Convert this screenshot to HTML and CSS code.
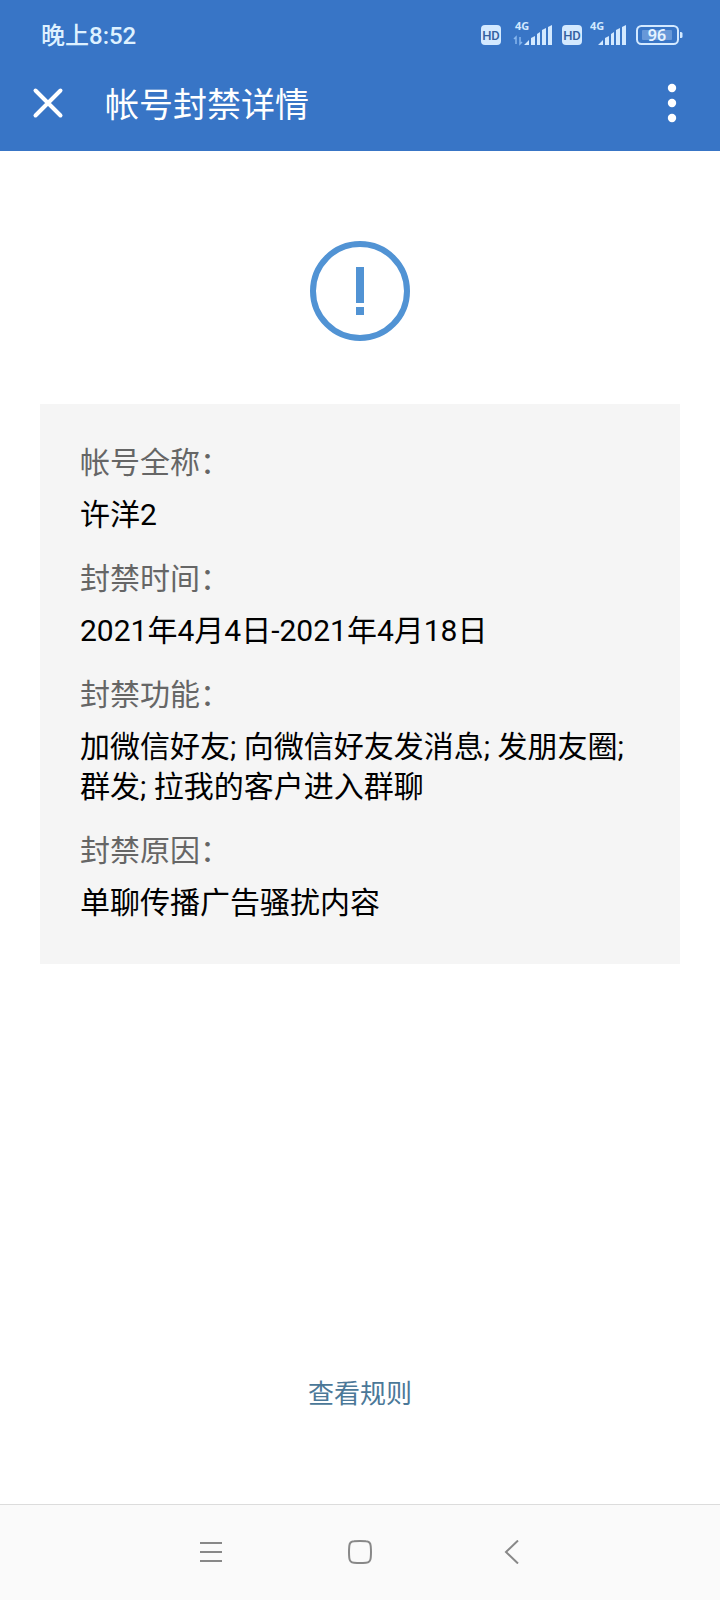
FILE: index.html
```html
<!DOCTYPE html>
<html lang="zh-CN">
<head>
  <meta charset="UTF-8">
  <meta name="viewport" content="width=device-width, initial-scale=1.0">
  <title>帐号封禁详情</title>
  <link rel="stylesheet" href="styles.css">
</head>
<body>
  <header class="header">
    <!-- Status Bar -->
    <div class="status-bar">
      <span class="status-time">晚上8:52</span>
      <div class="status-icons">
        <svg width="20" height="20" viewBox="0 0 20 20">
          <rect width="20" height="20" rx="4" fill="#d3e9ff"/>
          <text class="hd-text" x="10" y="15" text-anchor="middle">HD</text>
        </svg>
        <svg width="45" height="36" viewBox="0 0 45 36">
          <text class="net-text" x="6" y="13">4G</text>
          <path d="M7 27v-7l-2 2M11 20v7l2-2" fill="none" stroke="#86b6ee" stroke-width="1.5"/>
          <path d="M15 28l5-5v5zM22 21l4-2v9h-4zM28 17l3-2v13h-3zM33 13l4-2v17h-4zM39 10l4-2v20h-4z" fill="#d3e9ff"/>
        </svg>
        <svg width="20" height="20" viewBox="0 0 20 20">
          <rect width="20" height="20" rx="4" fill="#d3e9ff"/>
          <text class="hd-text" x="10" y="15" text-anchor="middle">HD</text>
        </svg>
        <svg width="38" height="36" viewBox="0 0 38 36">
          <text class="net-text" x="0" y="13">4G</text>
          <path d="M8 28l5-5v5zM15 21l4-2v9h-4zM21 17l3-2v13h-3zM26 13l4-2v17h-4zM32 10l4-2v20h-4z" fill="#d3e9ff"/>
        </svg>
        <svg width="47" height="36" viewBox="0 -8 47 36">
          <rect x="1" y="1" width="41" height="18" rx="4.5" fill="none" stroke="#d3e9ff" stroke-width="2"/>
          <rect x="6" y="5" width="30" height="10" rx="1" fill="#6798d8"/>
          <path d="M44 7h1a1.5 1.5 0 0 1 1.5 1.5v3a1.5 1.5 0 0 1-1.5 1.5h-1z" fill="#d3e9ff"/>
          <text class="battery-text" x="21" y="16" text-anchor="middle">96</text>
        </svg>
      </div>
    </div>

    <!-- Title Bar -->
    <div class="title-bar">
      <button class="icon-button" type="button" aria-label="关闭">
        <svg width="32" height="32" viewBox="0 0 32 32">
          <path d="M3.5 3.5l25 25M28.5 3.5l-25 25" stroke="#fff" stroke-width="4" stroke-linecap="round"/>
        </svg>
      </button>
      <h1 class="title">帐号封禁详情</h1>
      <button class="icon-button" type="button" aria-label="更多">
        <svg width="32" height="40" viewBox="0 0 32 40" fill="#fff">
          <circle cx="16" cy="5" r="4.2"/>
          <circle cx="16" cy="20" r="4.2"/>
          <circle cx="16" cy="35" r="4.2"/>
        </svg>
      </button>
    </div>
  </header>

  <main class="content">
    <svg class="notice-icon" width="100" height="100" viewBox="0 0 100 100">
      <circle cx="50" cy="50" r="47" fill="none" stroke="#5193d4" stroke-width="6"/>
      <path d="M46 26h8v36h-8zM46 66h8v8h-8z" fill="#5193d4"/>
    </svg>

    <dl class="card">
      <dt>帐号全称：</dt>
      <dd>许洋2</dd>
      <dt>封禁时间：</dt>
      <dd>2021年4月4日-2021年4月18日</dd>
      <dt>封禁功能：</dt>
      <dd>加微信好友; 向微信好友发消息; 发朋友圈; 群发; 拉我的客户进入群聊</dd>
      <dt>封禁原因：</dt>
      <dd>单聊传播广告骚扰内容</dd>
    </dl>

    <a class="rules-link" href="#">查看规则</a>
  </main>

  <!-- System Navigation -->
  <nav class="nav-bar">
    <button class="nav-button" type="button" aria-label="菜单">
      <svg width="24" height="24" viewBox="0 0 24 24">
        <path d="M2 3h22M2 12h22M2 21h22" stroke="#888" stroke-width="2"/>
      </svg>
    </button>
    <button class="nav-button" type="button" aria-label="主页">
      <svg width="24" height="24" viewBox="0 0 24 24">
        <path d="M6 1.3Q12 .7 18 1.3Q22.4 1.6 22.7 6Q23.3 12 22.7 18Q22.4 22.4 18 22.7Q12 23.3 6 22.7Q1.6 22.4 1.3 18Q.7 12 1.3 6Q1.6 1.6 6 1.3Z" fill="none" stroke="#888" stroke-width="2"/>
      </svg>
    </button>
    <button class="nav-button" type="button" aria-label="返回">
      <svg width="24" height="24" viewBox="0 0 24 24">
        <path d="M20 .5L8 12l12 11.5" fill="none" stroke="#888" stroke-width="2"/>
      </svg>
    </button>
  </nav>
</body>
</html>
```

FILE: styles.css
```css
/* General Styling */
* {
  box-sizing: border-box;
}

body {
  margin: 0;
  min-height: 100vh;
  display: flex;
  flex-direction: column;
  background: #fff;
  font-family: Roboto, "Noto Sans CJK SC", sans-serif;
}

svg {
  display: block;
}

button {
  padding: 0;
  border: none;
  background: none;
  cursor: pointer;
}

/* Header */
.header {
  background: #3875c6;
  color: #fff;
  padding-bottom: 16px;
}

.status-bar {
  display: flex;
  align-items: center;
  justify-content: space-between;
  height: 70px;
  padding: 0 37px 0 41px;
}

.status-time {
  padding-bottom: 4px;
  font-size: 24px;
  font-weight: 500;
  color: #def1ff;
}

.status-icons {
  display: flex;
  align-items: center;
  gap: 8px;
}

.hd-text {
  font: 500 13px Roboto, sans-serif;
  fill: #34619f;
}

.net-text {
  font: 700 11px "Open Sans", sans-serif;
  fill: #d3e9ff;
}

.battery-text {
  font: 600 16px "Noto Sans", sans-serif;
  fill: #e6f4ff;
}

.title-bar {
  display: flex;
  align-items: center;
  height: 65px;
  padding: 0 32px;
}

.title {
  flex: 1;
  margin: 0 0 0 41px;
  padding-top: 4px;
  font-size: 34px;
  font-weight: 400;
  line-height: 40px;
}

/* Content */
.content {
  flex: 1;
  display: flex;
  flex-direction: column;
  align-items: center;
  padding: 90px 40px;
}

.card {
  width: 100%;
  margin: 63px 0 0;
  padding: 39px 40px 41px;
  background: #f5f5f5;
  font-size: 30px;
  line-height: 40px;
}

.card dt {
  color: #666;
}

.card dd {
  margin: 12px 0 24px;
  color: #000;
}

.card dd:last-child {
  margin-bottom: 0;
}

.rules-link {
  margin-top: auto;
  font-size: 26px;
  line-height: 40px;
  color: #4b7898;
  text-decoration: none;
}

/* System Navigation */
.nav-bar {
  display: flex;
  justify-content: center;
  height: 96px;
  padding-bottom: 1px;
  border-top: 1px solid #dcdcdc;
  background: #fafafa;
}

.nav-button {
  display: flex;
  align-items: center;
  justify-content: center;
  width: 150px;
}
```
